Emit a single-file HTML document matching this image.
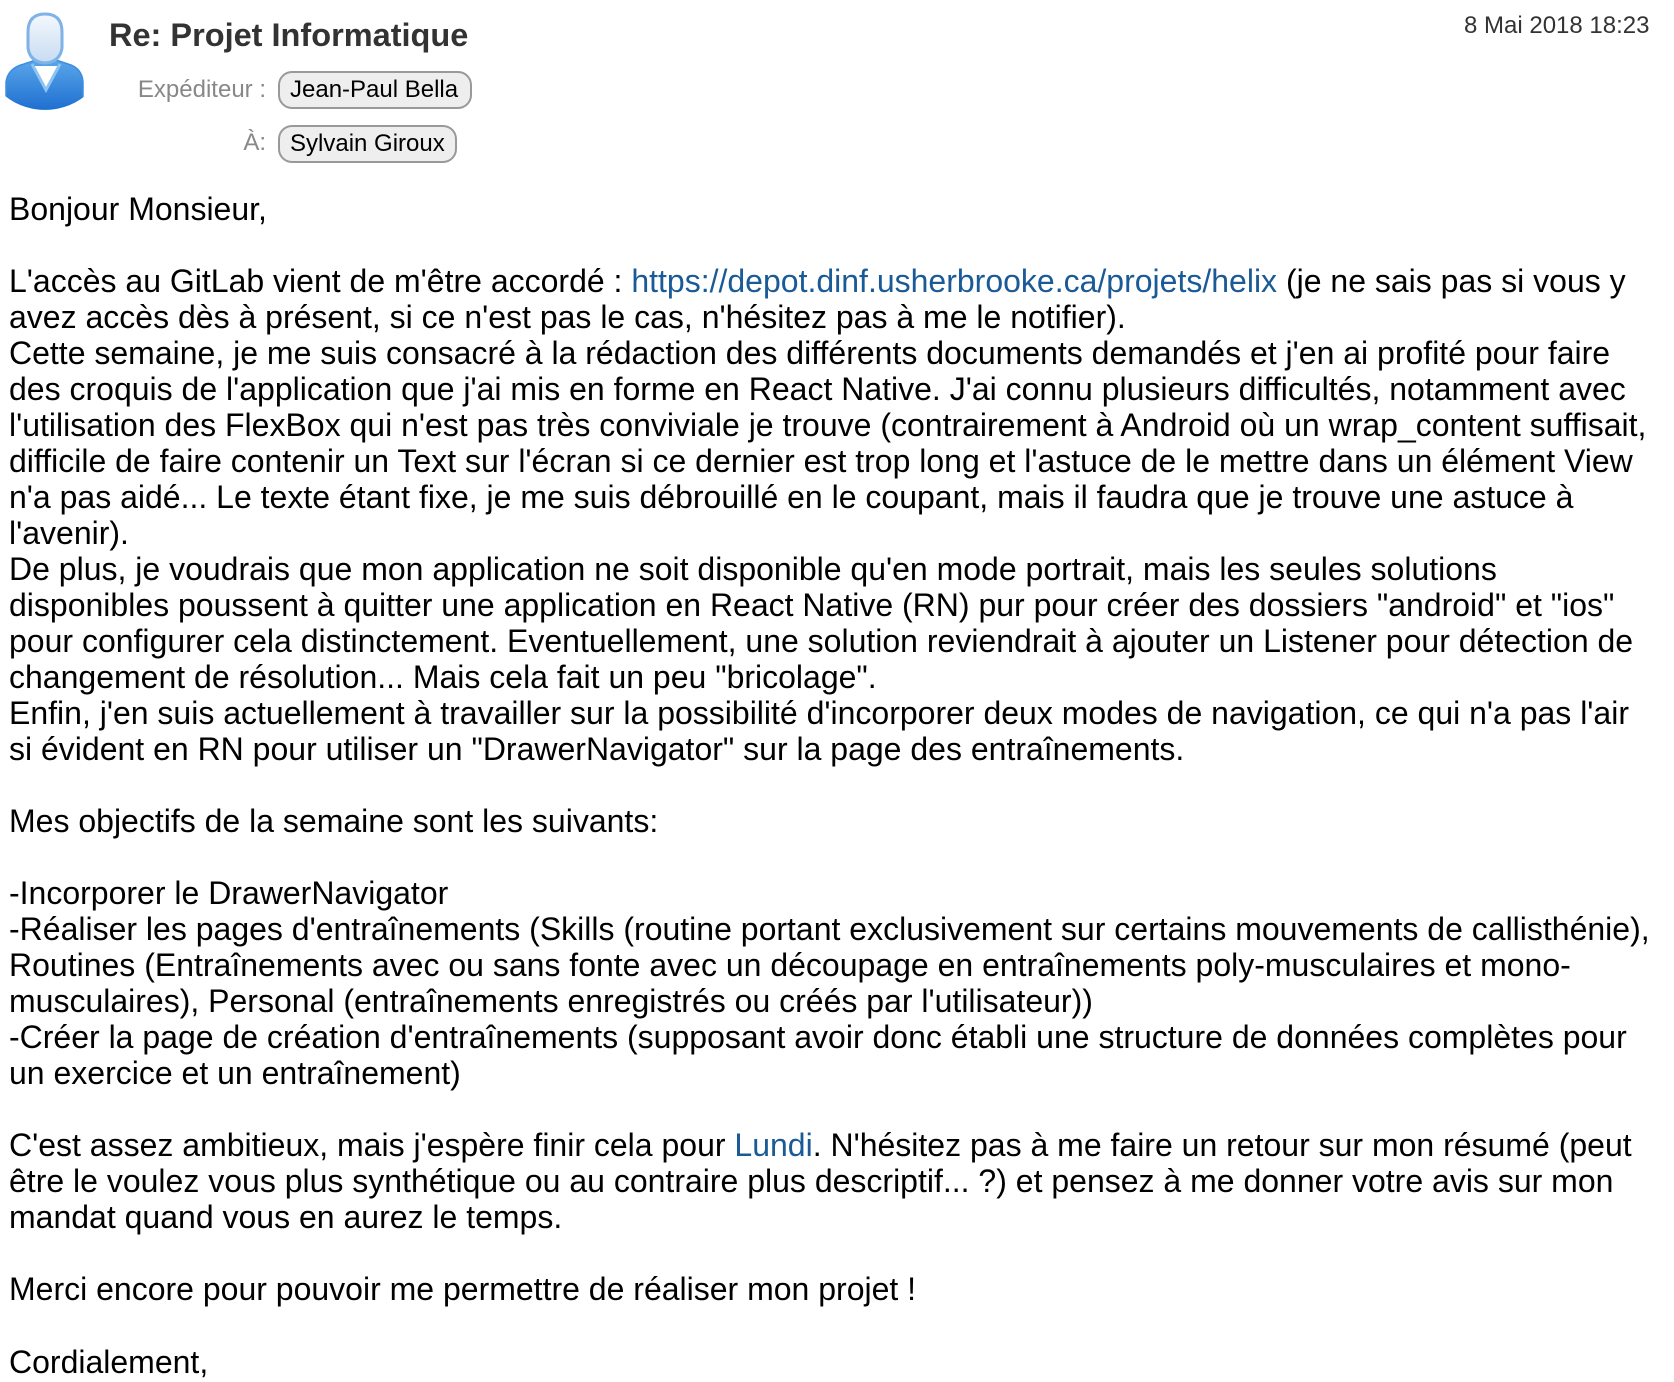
<!DOCTYPE html>
<html><head><meta charset="utf-8"><style>
html,body{margin:0;padding:0;background:#fff;width:1674px;height:1382px;overflow:hidden}
body{font-family:"Liberation Sans",Arial,sans-serif;color:#000;position:relative}
.subj{position:absolute;left:109px;top:17px;font-size:32.5px;font-weight:bold;color:#333;white-space:nowrap}
.date{position:absolute;left:1464px;top:12px;font-size:24px;color:#333;white-space:nowrap}
.lbl{position:absolute;font-size:24px;color:#888;white-space:nowrap;text-align:right}
.pill{position:absolute;height:34px;border:2px solid #999;border-radius:14px;background:#eee;font-size:24px;line-height:34px;padding:0 10px;box-sizing:content-box;white-space:nowrap;color:#000}
.body{position:absolute;left:9px;top:191px;font-size:32px;line-height:36.02px;white-space:nowrap}
a{color:#1a5a96;text-decoration:none}
</style></head><body>
<svg style="position:absolute;left:0;top:0" width="100" height="120" viewBox="0 0 100 120">
<defs>
<linearGradient id="hd" x1="0" y1="0" x2="0" y2="1"><stop offset="0" stop-color="#f4f8fd"/><stop offset="1" stop-color="#c7dcf2"/></linearGradient>
<linearGradient id="bd" x1="0" y1="0" x2="0" y2="1"><stop offset="0" stop-color="#5aa6ea"/><stop offset="1" stop-color="#1f6fd0"/></linearGradient>
<clipPath id="cp"><circle cx="45" cy="46" r="64"/></clipPath>
</defs>
<g clip-path="url(#cp)">
<path d="M6 110 L6 82 Q8 68 24 64 L36 60 L56 60 L68 64 Q82 68 83 82 L83 110 Z" fill="url(#bd)" stroke="#3d8ee0" stroke-width="1.5"/>
<path d="M34 66 L46 88 L58 66 Z" fill="#fff"/>
<path d="M32 64 L46 90 L60 64" fill="none" stroke="#8cc4f2" stroke-width="3"/>
</g>
<path d="M45 14 Q28 14 28 32 L28 48 Q30 62 45 63 Q60 62 62 48 L62 32 Q62 14 45 14 Z" fill="url(#hd)" stroke="#7fb2e6" stroke-width="3"/>
</svg>
<div class="subj">Re: Projet Informatique</div>
<div class="date">8 Mai 2018 18:23</div>
<div class="lbl" style="left:120px;width:146px;top:76px">Expéditeur :</div>
<div class="pill" style="left:278px;top:71px;width:170px">Jean-Paul Bella</div>
<div class="lbl" style="left:200px;width:66px;top:129px">À:</div>
<div class="pill" style="left:278px;top:125px;width:155px">Sylvain Giroux</div>
<div class="body">Bonjour Monsieur,<br><br>L'accès au GitLab vient de m'être accordé : <a>https://depot.dinf.usherbrooke.ca/projets/helix</a> (je ne sais pas si vous y<br>avez accès dès à présent, si ce n'est pas le cas, n'hésitez pas à me le notifier).<br>Cette semaine, je me suis consacré à la rédaction des différents documents demandés et j'en ai profité pour faire<br>des croquis de l'application que j'ai mis en forme en React Native. J'ai connu plusieurs difficultés, notamment avec<br>l'utilisation des FlexBox qui n'est pas très conviviale je trouve (contrairement à Android où un wrap_content suffisait,<br>difficile de faire contenir un Text sur l'écran si ce dernier est trop long et l'astuce de le mettre dans un élément View<br>n'a pas aidé... Le texte étant fixe, je me suis débrouillé en le coupant, mais il faudra que je trouve une astuce à<br>l'avenir).<br>De plus, je voudrais que mon application ne soit disponible qu'en mode portrait, mais les seules solutions<br>disponibles poussent à quitter une application en React Native (RN) pur pour créer des dossiers "android" et "ios"<br>pour configurer cela distinctement. Eventuellement, une solution reviendrait à ajouter un Listener pour détection de<br>changement de résolution... Mais cela fait un peu "bricolage".<br>Enfin, j'en suis actuellement à travailler sur la possibilité d'incorporer deux modes de navigation, ce qui n'a pas l'air<br>si évident en RN pour utiliser un "DrawerNavigator" sur la page des entraînements.<br><br>Mes objectifs de la semaine sont les suivants:<br><br>-Incorporer le DrawerNavigator<br>-Réaliser les pages d'entraînements (Skills (routine portant exclusivement sur certains mouvements de callisthénie),<br>Routines (Entraînements avec ou sans fonte avec un découpage en entraînements poly-musculaires et mono-<br>musculaires), Personal (entraînements enregistrés ou créés par l'utilisateur))<br>-Créer la page de création d'entraînements (supposant avoir donc établi une structure de données complètes pour<br>un exercice et un entraînement)<br><br>C'est assez ambitieux, mais j'espère finir cela pour <a>Lundi</a>. N'hésitez pas à me faire un retour sur mon résumé (peut<br>être le voulez vous plus synthétique ou au contraire plus descriptif... ?) et pensez à me donner votre avis sur mon<br>mandat quand vous en aurez le temps.<br><br>Merci encore pour pouvoir me permettre de réaliser mon projet !<br><br>Cordialement,</div>
</body></html>
